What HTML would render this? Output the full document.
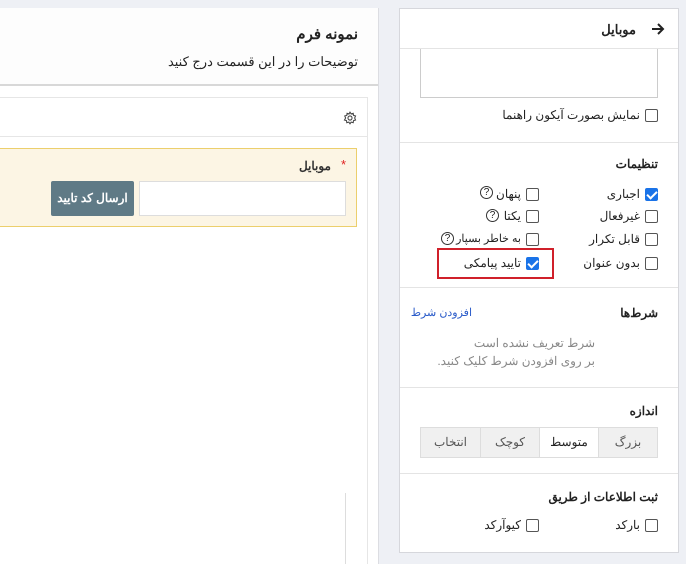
<!DOCTYPE html>
<html><head><meta charset="utf-8"><style>
*{box-sizing:border-box;margin:0;padding:0}
body{width:686px;height:564px;overflow:hidden;background:#eef0f5;font-family:"Liberation Sans","Noto Sans CJK SC",sans-serif;font-size:12px;color:#222;position:relative}
.a{position:absolute}
.cb{position:absolute;width:13px;height:13px;border:1px solid #555;border-radius:2px;background:#fff}
.cb.on{background:#1a73e8;border-color:#1a73e8}
.cb.on:after{content:"";position:absolute;left:3px;top:0px;width:4px;height:8px;border:solid #fff;border-width:0 2px 2px 0;transform:rotate(45deg)}
.t{position:absolute;direction:rtl;white-space:nowrap}
.q{position:absolute;width:13px;height:13px;border:1px solid #333;border-radius:50%;font-size:10px;line-height:11px;text-align:center}
.b{font-weight:bold}
</style></head><body>
<!-- left panel -->
<div class="a" style="left:0;top:8px;width:379px;height:556px;background:#fff;border-right:1px solid #dcdde2;border-top:1px solid #dcdde2"></div>
<div class="a" style="left:0;top:8px;width:378px;height:78px;background:#fdfdfd;border-bottom:2px solid #d8d8d8"></div>
<div class="t b" style="right:328px;top:25px;font-size:15px">نمونه فرم</div>
<div class="t" style="right:328px;top:54px;font-size:13px">توضیحات را در این قسمت درج کنید</div>
<div class="a" style="left:0;top:97px;width:368px;height:467px;border:1px solid #e6e6e6;border-left:none;border-bottom:none"></div>
<div class="a" style="left:0;top:136px;width:367px;height:1px;background:#e6e6e6"></div>
<svg class="a" style="left:343px;top:111px" width="14" height="14" viewBox="0 0 24 24" fill="none" stroke="#444" stroke-width="1.8"><circle cx="12" cy="12" r="3.5"/><path d="M12 2l2 3 3.5-1 .5 3.5 3.5 1-1.5 3.5 1.5 3.5-3.5 1-.5 3.5-3.5-1-2 3-2-3-3.5 1-.5-3.5-3.5-1L4.5 12 3 8.5l3.5-1L7 4l3.5 1z"/></svg>
<div class="a" style="left:0;top:148px;width:357px;height:79px;background:#fcf5e4;border:1px solid #eccf6c;border-left:none"></div>
<div class="t" style="right:340px;top:157px;color:#e02020;font-size:13px">*</div>
<div class="t b" style="right:355px;top:159px;font-size:12px;color:#333">موبایل</div>
<div class="a" style="left:139px;top:181px;width:207px;height:35px;background:#fff;border:1px solid #ddd"></div>
<div class="a b" style="left:51px;top:181px;width:83px;height:35px;background:#5f7a86;border-radius:2px;color:#fff;text-align:center;line-height:35px;direction:rtl">ارسال کد تایید</div>
<div class="a" style="left:345px;top:493px;width:1px;height:71px;background:#ddd"></div>
<!-- right panel -->
<div class="a" style="left:399px;top:8px;width:280px;height:545px;background:#fff;border:1px solid #d6d7dc"></div>
<div class="a" style="left:400px;top:48px;width:278px;height:1px;background:#e4e4e4"></div>
<svg class="a" style="left:651px;top:22px" width="14" height="14" viewBox="0 0 14 14" fill="none" stroke="#222" stroke-width="2"><path d="M1 7h11M7 2l5 5-5 5"/></svg>
<div class="t b" style="right:50px;top:22px;font-size:13px">موبایل</div>
<div class="a" style="left:420px;top:49px;width:238px;height:49px;border:1px solid #ccc;border-top:none"></div>
<div class="cb" style="left:645px;top:109px"></div>
<div class="t" style="right:46px;top:108px">نمایش بصورت آیکون راهنما</div>
<div class="a" style="left:400px;top:142px;width:278px;height:1px;background:#e4e4e4"></div>
<div class="t b" style="right:28px;top:157px">تنظیمات</div>
<div class="cb on" style="left:645px;top:188px"></div><div class="t" style="right:46px;top:187px">اجباری</div>
<div class="cb" style="left:645px;top:210px"></div><div class="t" style="right:46px;top:209px">غیرفعال</div>
<div class="cb" style="left:645px;top:233px"></div><div class="t" style="right:46px;top:232px">قابل تکرار</div>
<div class="cb" style="left:645px;top:257px"></div><div class="t" style="right:46px;top:256px">بدون عنوان</div>
<div class="cb" style="left:526px;top:188px"></div><div class="t" style="right:165px;top:187px">پنهان</div><div class="q" style="left:480px;top:186px">?</div>
<div class="cb" style="left:526px;top:210px"></div><div class="t" style="right:165px;top:209px">یکتا</div><div class="q" style="left:486px;top:209px">?</div>
<div class="cb" style="left:526px;top:233px"></div><div class="t" style="right:165px;top:232px;font-size:11px">به خاطر بسپار</div><div class="q" style="left:441px;top:232px">?</div>
<div class="cb on" style="left:526px;top:257px"></div><div class="t" style="right:165px;top:256px">تایید پیامکی</div>
<div class="a" style="left:437px;top:248px;width:117px;height:31px;border:2px solid #d0202a"></div>
<div class="a" style="left:400px;top:287px;width:278px;height:1px;background:#e4e4e4"></div>
<div class="t b" style="right:28px;top:306px">شرط‌ها</div>
<div class="t" style="right:214px;top:306px;color:#2a5bc9;font-size:11px">افزودن شرط</div>
<div class="t" style="right:91px;top:336px;color:#888;font-size:12px">شرط تعریف نشده است</div>
<div class="t" style="right:91px;top:354px;color:#888;font-size:12px">بر روی افزودن شرط کلیک کنید.</div>
<div class="a" style="left:400px;top:387px;width:278px;height:1px;background:#e4e4e4"></div>
<div class="t b" style="right:28px;top:404px">اندازه</div>
<div class="a" style="left:420px;top:427px;width:238px;height:31px;border:1px solid #ddd;background:#f0f0f0;display:flex;direction:rtl;text-align:center;line-height:29px;color:#555">
<div style="width:59px;border-left:1px solid #ddd">بزرگ</div>
<div style="width:59px;border-left:1px solid #ddd;background:#fff;color:#222">متوسط</div>
<div style="width:59px;border-left:1px solid #ddd">کوچک</div>
<div style="flex:1">انتخاب</div></div>
<div class="a" style="left:400px;top:473px;width:278px;height:1px;background:#e4e4e4"></div>
<div class="t b" style="right:28px;top:490px">ثبت اطلاعات از طریق</div>
<div class="cb" style="left:645px;top:519px"></div><div class="t" style="right:46px;top:518px">بارکد</div>
<div class="cb" style="left:526px;top:519px"></div><div class="t" style="right:165px;top:518px">کیوآرکد</div>
</body></html>
